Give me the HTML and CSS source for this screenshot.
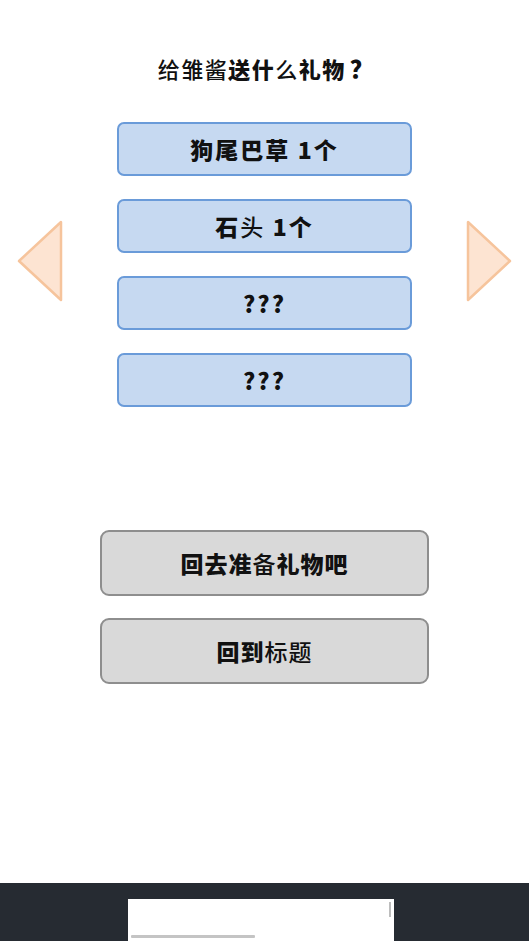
FILE: index.html
```html
<!DOCTYPE html>
<html lang="zh">
<head>
<meta charset="utf-8">
<link rel="stylesheet" href="styles.css">
</head>
<body>
<div class="page">
  <main class="stage">
    <h1 class="title"><span class="r">给雏酱</span><span class="b">送什</span><span class="r">么</span><span class="b">礼物</span><span class="b q">？</span></h1>
    <div class="picker">
      <svg class="arrow" width="50" height="84" viewBox="0 0 50 84"><polygon points="45,3 45,81 3,42" fill="#fde4d2" stroke="#f6c49c" stroke-width="2.5" stroke-linejoin="round"/></svg>
      <div class="options">
        <div class="opt"><span class="b">狗尾巴草 1个</span></div>
        <div class="opt"><span class="b">石</span><span class="r">头</span><span class="b"> 1个</span></div>
        <div class="opt"><span class="b">???</span></div>
        <div class="opt"><span class="b">???</span></div>
      </div>
      <svg class="arrow" width="50" height="84" viewBox="0 0 50 84"><polygon points="5,3 5,81 47,42" fill="#fde4d2" stroke="#f6c49c" stroke-width="2.5" stroke-linejoin="round"/></svg>
    </div>
    <div class="actions">
      <div class="act"><span class="b">回去准</span><span class="r">备</span><span class="b">礼物吧</span></div>
      <div class="act"><span class="b">回到</span><span class="r">标题</span></div>
    </div>
  </main>
  <footer class="bar">
    <div class="frame">
      <div class="vscroll"></div>
      <div class="hscroll"></div>
    </div>
  </footer>
</div>
</body>
</html>
```

FILE: styles.css
```css
html, body {
  margin: 0;
  padding: 0;
  background: #ffffff;
}
body {
  font-family: "Noto Sans CJK SC", "Noto Sans", sans-serif;
  color: #111111;
}
.page {
  width: 529px;
  height: 941px;
  display: flex;
  flex-direction: column;
  overflow: hidden;
}
.stage {
  flex: 1;
  display: flex;
  flex-direction: column;
  align-items: center;
}
.b { font-weight: 900; }
.r { font-weight: 500; }
.title {
  margin: 52px 0 0 0;
  font-size: 22px;
  line-height: 32px;
  letter-spacing: 1.5px;
  padding-left: 4px;
  font-weight: normal;
}
.q {
  font-size: 24px;
  margin-left: 4px;
}
.picker {
  margin-top: 38px;
  width: 529px;
  display: flex;
  align-items: center;
  justify-content: space-between;
  padding: 0 16px;
  box-sizing: border-box;
}
.arrow {
  display: block;
  margin-bottom: 8px;
}
.options {
  display: flex;
  flex-direction: column;
  gap: 23px;
}
.opt {
  width: 291px;
  height: 50px;
  border: 2px solid #6a9bd9;
  border-radius: 7px;
  background: #c6d9f1;
  display: flex;
  align-items: center;
  justify-content: center;
  font-size: 23px;
  letter-spacing: 2px;
  white-space: pre;
}
.actions {
  margin-top: 123px;
  display: flex;
  flex-direction: column;
  gap: 22px;
}
.act {
  width: 325px;
  height: 62px;
  border: 2px solid #8e8e8e;
  border-radius: 9px;
  background: #d9d9d9;
  display: flex;
  align-items: center;
  justify-content: center;
  font-size: 23px;
  letter-spacing: 1px;
}
.bar {
  height: 58px;
  background: #262b32;
  display: flex;
  justify-content: center;
  align-items: flex-end;
}
.frame {
  width: 266px;
  height: 42px;
  margin-right: 8px;
  background: #ffffff;
  position: relative;
}
.vscroll {
  position: absolute;
  right: 3px;
  top: 3px;
  width: 2px;
  height: 15px;
  background: #bdbdbd;
}
.hscroll {
  position: absolute;
  left: 3px;
  bottom: 3px;
  width: 124px;
  height: 3px;
  background: #c4c4c4;
  border-radius: 1px;
}
```
